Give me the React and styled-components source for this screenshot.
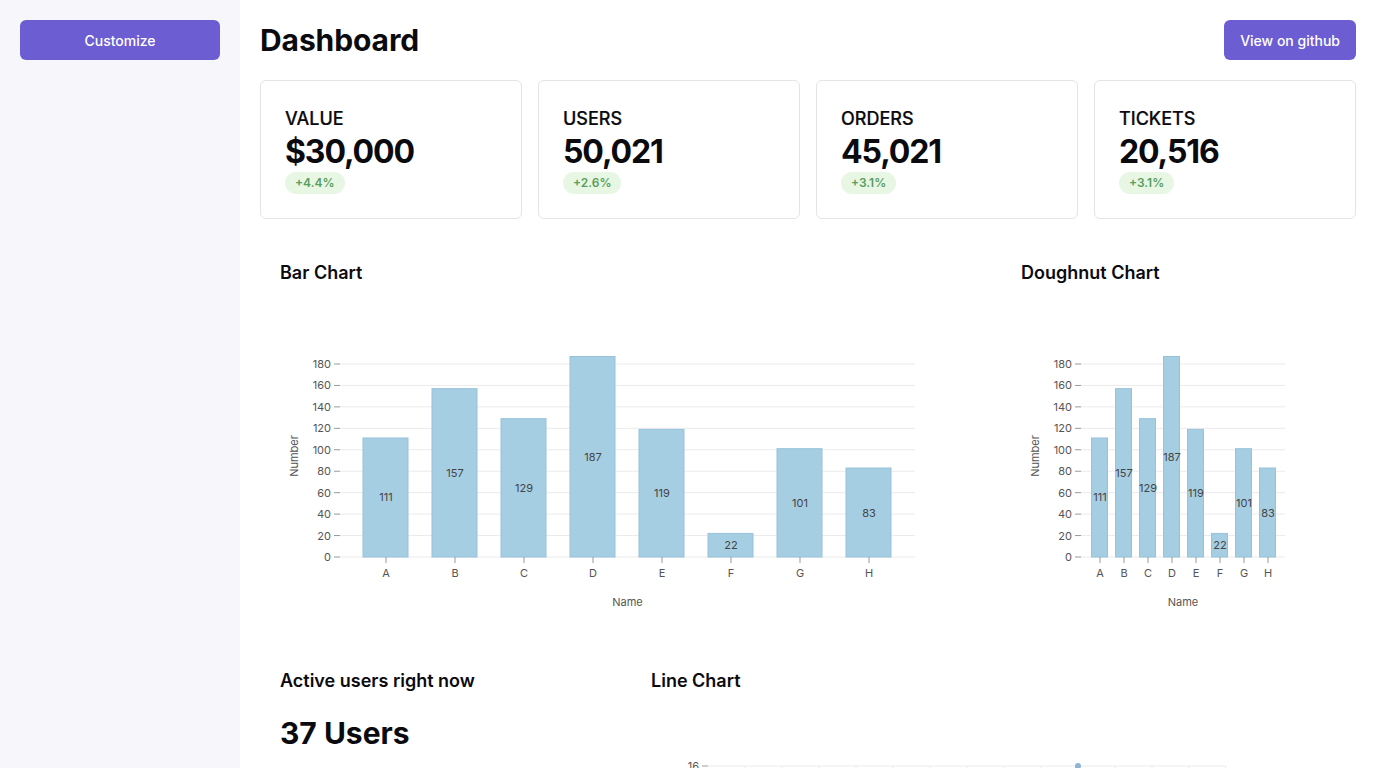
import React from "react";
import styled, { createGlobalStyle } from "styled-components";

const GlobalStyle = createGlobalStyle`
  html, body {
    margin: 0;
    padding: 0;
    background: #fff;
    font-family: Inter, "Noto Sans", sans-serif;
    color: #0b0b0f;
  }
`;

const stats = [
  { label: "VALUE", value: "$30,000", change: "+4.4%" },
  { label: "USERS", value: "50,021", change: "+2.6%" },
  { label: "ORDERS", value: "45,021", change: "+3.1%" },
  { label: "TICKETS", value: "20,516", change: "+3.1%" },
];

const bars = [
  { name: "A", v: 111 },
  { name: "B", v: 157 },
  { name: "C", v: 129 },
  { name: "D", v: 187 },
  { name: "E", v: 119 },
  { name: "F", v: 22 },
  { name: "G", v: 101 },
  { name: "H", v: 83 },
];

const lineData = [4, 8, 5, 10, 7, 12, 9, 6, 11, 13, 16, 10, 8, 12, 9];

const BASE = 270;
const yOf = (v) => BASE - (v * 193) / 180;

const BarChartSvg = ({ width, plotEnd, band, offset, barWidth }) => {
  const ticks = [0, 20, 40, 60, 80, 100, 120, 140, 160, 180];
  return (
    <svg width={width} height={326}>
      {ticks.map((t) => (
        <g key={t}>
          <line x1={60} x2={plotEnd} y1={yOf(t)} y2={yOf(t)} stroke="#ebebeb" />
          <line x1={54} x2={60} y1={yOf(t)} y2={yOf(t)} stroke="#999" />
          <text x={51} y={yOf(t) + 4} textAnchor="end" fontSize="11" fill="#555">
            {t}
          </text>
        </g>
      ))}
      {bars.map((b, i) => {
        const cx = 60 + offset + band * (i + 0.5);
        const top = yOf(b.v);
        return (
          <g key={b.name}>
            <rect
              x={cx - barWidth / 2 - 0.5}
              y={top}
              width={barWidth}
              height={BASE - top}
              fill="#a6cee3"
              stroke="#97c2da"
            />
            <text x={cx} y={(top + BASE) / 2 + 4} textAnchor="middle" fontSize="11" fill="#444">
              {b.v}
            </text>
            <line x1={cx} x2={cx} y1={BASE} y2={BASE + 6} stroke="#999" />
            <text x={cx} y={BASE + 20} textAnchor="middle" fontSize="11" fill="#555">
              {b.name}
            </text>
          </g>
        );
      })}
      <text x={(60 + plotEnd) / 2} y={319} textAnchor="middle" fontSize="11" fill="#555">
        Name
      </text>
      <text
        x={15}
        y={169}
        textAnchor="middle"
        fontSize="11"
        fill="#555"
        transform="rotate(-90 15 169)"
        dominantBaseline="middle"
      >
        Number
      </text>
    </svg>
  );
};

const LineChartSvg = () => {
  const x0 = 57;
  const step = 37;
  const top = 71;
  const scale = 12.5;
  const ly = (v) => top + (16 - v) * scale;
  const pts = lineData.map((v, i) => [x0 + i * step, ly(v)]);
  return (
    <svg width={685} height={300}>
      {[0, 4, 8, 12, 16].map((t) => (
        <g key={t}>
          <line x1={x0} x2={x0 + 14 * step} y1={ly(t)} y2={ly(t)} stroke="#ebebeb" />
          <line x1={51} x2={x0} y1={ly(t)} y2={ly(t)} stroke="#999" />
          <text x={48} y={ly(t) + 4} textAnchor="end" fontSize="11" fill="#555">
            {t}
          </text>
        </g>
      ))}
      {lineData.map((_, i) => (
        <line key={i} x1={x0 + i * step} x2={x0 + i * step} y1={top} y2={ly(0)} stroke="#ebebeb" />
      ))}
      <polyline
        points={pts.map((p) => p.join(",")).join(" ")}
        fill="none"
        stroke="#8fb4d4"
        strokeWidth="2"
      />
      {pts.map((p, i) => (
        <circle key={i} cx={p[0]} cy={p[1]} r="3" fill="#8fb4d4" />
      ))}
    </svg>
  );
};

const App = () => {
  return (
    <Layout>
      <GlobalStyle />
      <Sidebar>
        <Button>Customize</Button>
      </Sidebar>
      <Main>
        <Header>
          <Title>Dashboard</Title>
          <Button as="a">View on github</Button>
        </Header>

        <StatGrid>
          {stats.map((s) => (
            <StatCard key={s.label}>
              <StatLabel>{s.label}</StatLabel>
              <StatValue>{s.value}</StatValue>
              <Badge>{s.change}</Badge>
            </StatCard>
          ))}
        </StatGrid>

        <ChartRow>
          <Panel>
            <PanelTitle>Bar Chart</PanelTitle>
            <BarChartSvg width={701} plotEnd={635} band={69} offset={11.5} barWidth={45} />
          </Panel>
          <Panel>
            <PanelTitle>Doughnut Chart</PanelTitle>
            <BarChartSvg width={315} plotEnd={264} band={24} offset={7} barWidth={16} />
          </Panel>
        </ChartRow>

        <BottomRow>
          <Panel>
            <PanelTitle>Active users right now</PanelTitle>
            <BigNumber>37 Users</BigNumber>
          </Panel>
          <Panel>
            <PanelTitle>Line Chart</PanelTitle>
            <LineChartSvg />
          </Panel>
        </BottomRow>
      </Main>
    </Layout>
  );
};

export default App;

const Layout = styled.div`
  display: flex;
  min-height: 100vh;
`;

const Sidebar = styled.aside`
  width: 240px;
  flex-shrink: 0;
  background: #f7f7fb;
  padding: 20px;
  box-sizing: border-box;
  display: flex;
  flex-direction: column;
`;

const Button = styled.button`
  display: inline-flex;
  align-items: center;
  justify-content: center;
  height: 40px;
  padding: 0 16px;
  border: none;
  border-radius: 6px;
  background: #6c5dd3;
  color: #fff;
  font-family: Inter, sans-serif;
  font-size: 14px;
  font-weight: 500;
  text-decoration: none;
  cursor: pointer;
  box-sizing: border-box;
`;

const Main = styled.main`
  flex: 1;
  padding: 20px;
  display: flex;
  flex-direction: column;
  gap: 20px;
  min-width: 0;
`;

const Header = styled.header`
  display: flex;
  align-items: center;
  justify-content: space-between;
  height: 40px;
`;

const Title = styled.h1`
  margin: 0;
  font-size: 30px;
  font-weight: 700;
  letter-spacing: -0.1px;
`;

const StatGrid = styled.div`
  display: grid;
  grid-template-columns: repeat(4, 1fr);
  gap: 16px;
`;

const StatCard = styled.div`
  border: 1px solid #e4e4e7;
  border-radius: 6px;
  padding: 27px 24px 24px;
  display: flex;
  flex-direction: column;
  align-items: flex-start;
`;

const StatLabel = styled.div`
  font-size: 18px;
  font-weight: 500;
  -webkit-text-stroke: 0.2px #0b0b0f;
  line-height: 22px;
`;

const StatValue = styled.div`
  font-size: 32px;
  font-weight: 700;
  letter-spacing: -1.1px;
  line-height: 40px;
  margin-top: 2px;
`;

const Badge = styled.span`
  background: #e8f6e4;
  color: #5a9e5c;
  font-size: 12px;
  font-weight: 600;
  line-height: 22px;
  padding: 0 10px;
  border-radius: 11px;
`;

const ChartRow = styled.div`
  display: grid;
  grid-template-columns: 1fr 355px;
`;

const BottomRow = styled.div`
  display: grid;
  grid-template-columns: 371px 1fr;
  margin-top: 14px;
`;

const Panel = styled.section`
  padding: 20px 20px 0;
  display: flex;
  flex-direction: column;
`;

const PanelTitle = styled.h3`
  margin: 0;
  font-size: 18px;
  font-weight: 600;
  line-height: 28px;
`;

const BigNumber = styled.div`
  margin-top: 20px;
  font-size: 30px;
  font-weight: 700;
  line-height: 36px;
`;
